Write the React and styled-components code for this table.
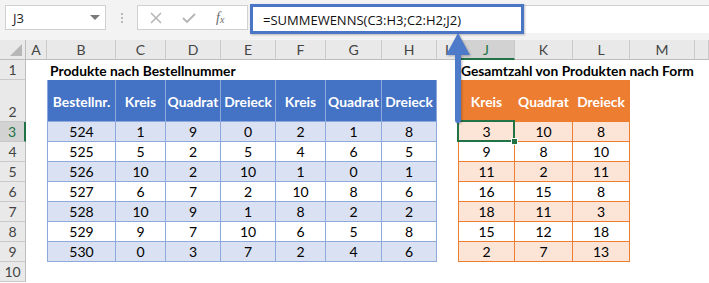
import React from "react";
import styled, { createGlobalStyle, css } from "styled-components";

const GlobalStyle = createGlobalStyle`
  html, body {
    margin: 0;
    padding: 0;
    background: #ffffff;
  }
  body {
    width: 709px;
    height: 283px;
    overflow: hidden;
    font-family: Lato, "Liberation Sans", sans-serif;
  }
`;

const COLUMNS = [
  { name: "A", w: 21 },
  { name: "B", w: 69 },
  { name: "C", w: 50 },
  { name: "D", w: 55 },
  { name: "E", w: 55 },
  { name: "F", w: 50 },
  { name: "G", w: 56 },
  { name: "H", w: 55 },
  { name: "I", w: 21 },
  { name: "J", w: 57 },
  { name: "K", w: 58 },
  { name: "L", w: 57 },
  { name: "M", w: 65 },
  { name: "", w: 0 },
];

const ROW_HEIGHTS = [20, 42, 20, 20, 20, 20, 20, 20, 20, 20];

const orders = [
  ["524", 1, 9, 0, 2, 1, 8],
  ["525", 5, 2, 5, 4, 6, 5],
  ["526", 10, 2, 10, 1, 0, 1],
  ["527", 6, 7, 2, 10, 8, 6],
  ["528", 10, 9, 1, 8, 2, 2],
  ["529", 9, 7, 10, 6, 5, 8],
  ["530", 0, 3, 7, 2, 4, 6],
];

const totals = [
  [3, 10, 8],
  [9, 8, 10],
  [11, 2, 11],
  [16, 15, 8],
  [18, 11, 3],
  [15, 12, 18],
  [2, 7, 13],
];

const Page = styled.div`
  position: relative;
  width: 709px;
  height: 283px;
  overflow: hidden;
  background: #ffffff;
`;

const Toolbar = styled.div`
  display: flex;
  align-items: flex-start;
  height: 40px;
  padding: 5px 0 0 5px;
  box-sizing: border-box;
  background: #f3f3f3;
`;

const NameBox = styled.div`
  display: flex;
  align-items: center;
  justify-content: space-between;
  width: 101px;
  height: 25px;
  box-sizing: border-box;
  padding: 0 5px 0 7px;
  background: #ffffff;
  border: 1px solid #d0d0d0;
  font-family: "Open Sans", "Liberation Sans", sans-serif;
  font-size: 13px;
  color: #222;
`;

const Caret = styled.span`
  width: 0;
  height: 0;
  border-left: 5px solid transparent;
  border-right: 5px solid transparent;
  border-top: 5px solid #7a7a7a;
`;

const Grip = styled.div`
  display: flex;
  flex-direction: column;
  align-items: center;
  justify-content: center;
  gap: 2px;
  width: 31px;
  height: 25px;
  span {
    width: 2px;
    height: 2px;
    background: #b8b8b8;
  }
`;

const FxBox = styled.div`
  display: flex;
  align-items: center;
  width: 111px;
  height: 25px;
  box-sizing: border-box;
  background: #ffffff;
  border: 1px solid #d0d0d0;
  padding-left: 11px;
  gap: 18px;
  color: #b3b3b3;
`;

const FxLabel = styled.span`
  font-family: "Liberation Serif", serif;
  font-style: italic;
  font-size: 14px;
  color: #6a6a6a;
  margin-left: 1px;
  sub {
    font-size: 10px;
    vertical-align: -1px;
  }
`;

const FormulaField = styled.div`
  position: relative;
  flex: 1;
  display: flex;
  align-items: center;
  height: 28px;
  margin-left: 2px;
  box-sizing: border-box;
  padding-left: 12px;
  background: #ffffff;
  border-top: 1px solid #d0d0d0;
  border-left: 1px solid #d0d0d0;
  font-family: "Open Sans", "Liberation Sans", sans-serif;
  font-size: 13px;
  color: #111;
`;

const Highlight = styled.div`
  position: absolute;
  left: -1px;
  top: -2px;
  width: 274px;
  height: 30px;
  box-sizing: border-box;
  border: 3px solid #4a76c5;
  box-shadow: 1px 1px 2px rgba(0, 0, 0, 0.25);
`;

const Sheet = styled.div`
  display: grid;
  grid-template-columns: 26px ${COLUMNS.slice(0, -1).map((c) => `${c.w}px`).join(" ")} 1fr;
  grid-template-rows: 20px ${ROW_HEIGHTS.map((h) => `${h}px`).join(" ")};
`;

const Corner = styled.div`
  grid-row: 1;
  grid-column: 1;
  display: flex;
  align-items: flex-end;
  justify-content: flex-end;
  padding: 0 3px 3px 0;
  background: #e9e9e9;
  border-right: 1px solid #bdbdbd;
  border-bottom: 1px solid #bdbdbd;
  &::after {
    content: "";
    width: 0;
    height: 0;
    border-left: 12px solid transparent;
    border-bottom: 12px solid #b7b7b7;
  }
`;

const ColHeader = styled.div`
  grid-row: 1;
  grid-column: ${(p) => p.$col};
  display: flex;
  align-items: center;
  justify-content: center;
  font-size: 14px;
  color: ${(p) => (p.$active ? "#217346" : "#444")};
  background: ${(p) => (p.$active ? "#d2d2d2" : "#e9e9e9")};
  border-right: 1px solid #c9c9c9;
  border-bottom: ${(p) => (p.$active ? "2px solid #217346" : "1px solid #bdbdbd")};
  box-sizing: border-box;
`;

const RowHeader = styled.div`
  grid-column: 1;
  grid-row: ${(p) => p.$row};
  display: flex;
  align-items: flex-end;
  justify-content: center;
  padding-bottom: 1px;
  font-size: 14px;
  color: ${(p) => (p.$active ? "#217346" : "#444")};
  background: ${(p) => (p.$active ? "#d2d2d2" : "#e9e9e9")};
  border-bottom: 1px solid #c9c9c9;
  border-right: ${(p) => (p.$active ? "2px solid #217346" : "1px solid #bdbdbd")};
  box-sizing: border-box;
`;

const Title = styled.div`
  grid-row: 2;
  grid-column: ${(p) => p.$cols};
  display: flex;
  align-items: flex-end;
  padding: 0 0 1px 3px;
  font-size: 13.8px;
  font-weight: 700;
  color: #000;
  white-space: nowrap;
`;

const Table = styled.div`
  grid-row: 3 / 11;
  grid-column: ${(p) => p.$cols};
  display: grid;
  grid-template-columns: ${(p) => p.$widths.map((w) => `${w}px`).join(" ")};
  grid-template-rows: 42px repeat(7, 20px);
`;

const palettes = {
  blue: { head: "#4472c4", headLine: "#8ea9db", band: "#d9e1f2", line: "#8ea9db" },
  orange: { head: "#ed7d31", headLine: "#ed7d31", band: "#fce4d6", line: "#ed7d31" },
};

const HeadCell = styled.div`
  display: flex;
  align-items: center;
  justify-content: center;
  padding-top: 2px;
  box-sizing: border-box;
  background: ${(p) => palettes[p.$tone].head};
  border-right: 1px solid ${(p) => palettes[p.$tone].headLine};
  border-bottom: 1px solid ${(p) => palettes[p.$tone].line};
  ${(p) =>
    p.$first &&
    css`
      border-left: 1px solid ${palettes[p.$tone].line};
    `}
  color: #ffffff;
  font-size: 13.8px;
  font-weight: 700;
  white-space: nowrap;
`;

const BodyCell = styled.div`
  position: relative;
  display: flex;
  align-items: center;
  justify-content: center;
  box-sizing: border-box;
  background: ${(p) => (p.$band ? palettes[p.$tone].band : "#ffffff")};
  border-right: 1px solid ${(p) => palettes[p.$tone].line};
  border-bottom: 1px solid ${(p) => palettes[p.$tone].line};
  ${(p) =>
    p.$first &&
    css`
      border-left: 1px solid ${palettes[p.$tone].line};
    `}
  font-size: 14px;
  color: #000;
  ${(p) =>
    p.$selected &&
    css`
      &::after {
        content: "";
        position: absolute;
        left: -2px;
        top: -2px;
        right: -1px;
        bottom: -1px;
        border: 2px solid #217346;
      }
      &::before {
        content: "";
        position: absolute;
        right: -4px;
        bottom: -4px;
        width: 5px;
        height: 5px;
        background: #217346;
        border: 1px solid #ffffff;
        z-index: 2;
      }
    `}
`;

const Arrow = styled.svg`
  position: absolute;
  left: 440px;
  top: 28px;
  filter: drop-shadow(1px 1px 1px rgba(0, 0, 0, 0.25));
`;

function DataTable({ tone, cols, widths, headers, rows, selected }) {
  return (
    <Table $cols={cols} $widths={widths}>
      {headers.map((h, i) => (
        <HeadCell key={h + i} $tone={tone} $first={i === 0}>
          {h}
        </HeadCell>
      ))}
      {rows.map((row, r) =>
        row.map((v, c) => (
          <BodyCell
            key={`${r}-${c}`}
            $tone={tone}
            $band={r % 2 === 0}
            $first={c === 0}
            $selected={selected && r === 0 && c === 0}
          >
            {v}
          </BodyCell>
        ))
      )}
    </Table>
  );
}

export default function App() {
  return (
    <Page>
      <GlobalStyle />
      <Toolbar>
        <NameBox>
          J3
          <Caret />
        </NameBox>
        <Grip>
          <span />
          <span />
          <span />
        </Grip>
        <FxBox>
          <svg width="14" height="14" viewBox="0 0 14 14">
            <path d="M2 2 L12 12 M12 2 L2 12" stroke="#b5b5b5" strokeWidth="1.5" />
          </svg>
          <svg width="16" height="14" viewBox="0 0 16 14">
            <path d="M2 7 L6 11 L14 3" stroke="#b5b5b5" strokeWidth="1.8" fill="none" />
          </svg>
          <FxLabel>
            f<sub>x</sub>
          </FxLabel>
        </FxBox>
        <FormulaField>
          =SUMMEWENNS(C3:H3;C2:H2;J2)
          <Highlight />
        </FormulaField>
      </Toolbar>

      <Sheet>
        <Corner />
        {COLUMNS.map((c, i) => (
          <ColHeader key={i} $col={i + 2} $active={c.name === "J"}>
            {c.name}
          </ColHeader>
        ))}
        {ROW_HEIGHTS.map((_, i) => (
          <RowHeader key={i} $row={i + 2} $active={i === 2}>
            {i + 1}
          </RowHeader>
        ))}

        <Title $cols="3 / 10">Produkte nach Bestellnummer</Title>
        <Title $cols="11 / 16">Gesamtzahl von Produkten nach Form</Title>

        <DataTable
          tone="blue"
          cols="3 / 10"
          widths={[69, 50, 55, 55, 50, 56, 55]}
          headers={["Bestellnr.", "Kreis", "Quadrat", "Dreieck", "Kreis", "Quadrat", "Dreieck"]}
          rows={orders}
        />
        <DataTable
          tone="orange"
          cols="11 / 14"
          widths={[57, 58, 57]}
          headers={["Kreis", "Quadrat", "Dreieck"]}
          rows={totals}
          selected
        />
      </Sheet>

      <Arrow width="34" height="100" viewBox="0 0 34 100">
        <path
          d="M18 5 L30 27 L21 27 L21 92 Q21 95 18 95 Q15 95 15 92 L15 27 L6 27 Z"
          fill="#4d7bca"
        />
      </Arrow>
    </Page>
  );
}
